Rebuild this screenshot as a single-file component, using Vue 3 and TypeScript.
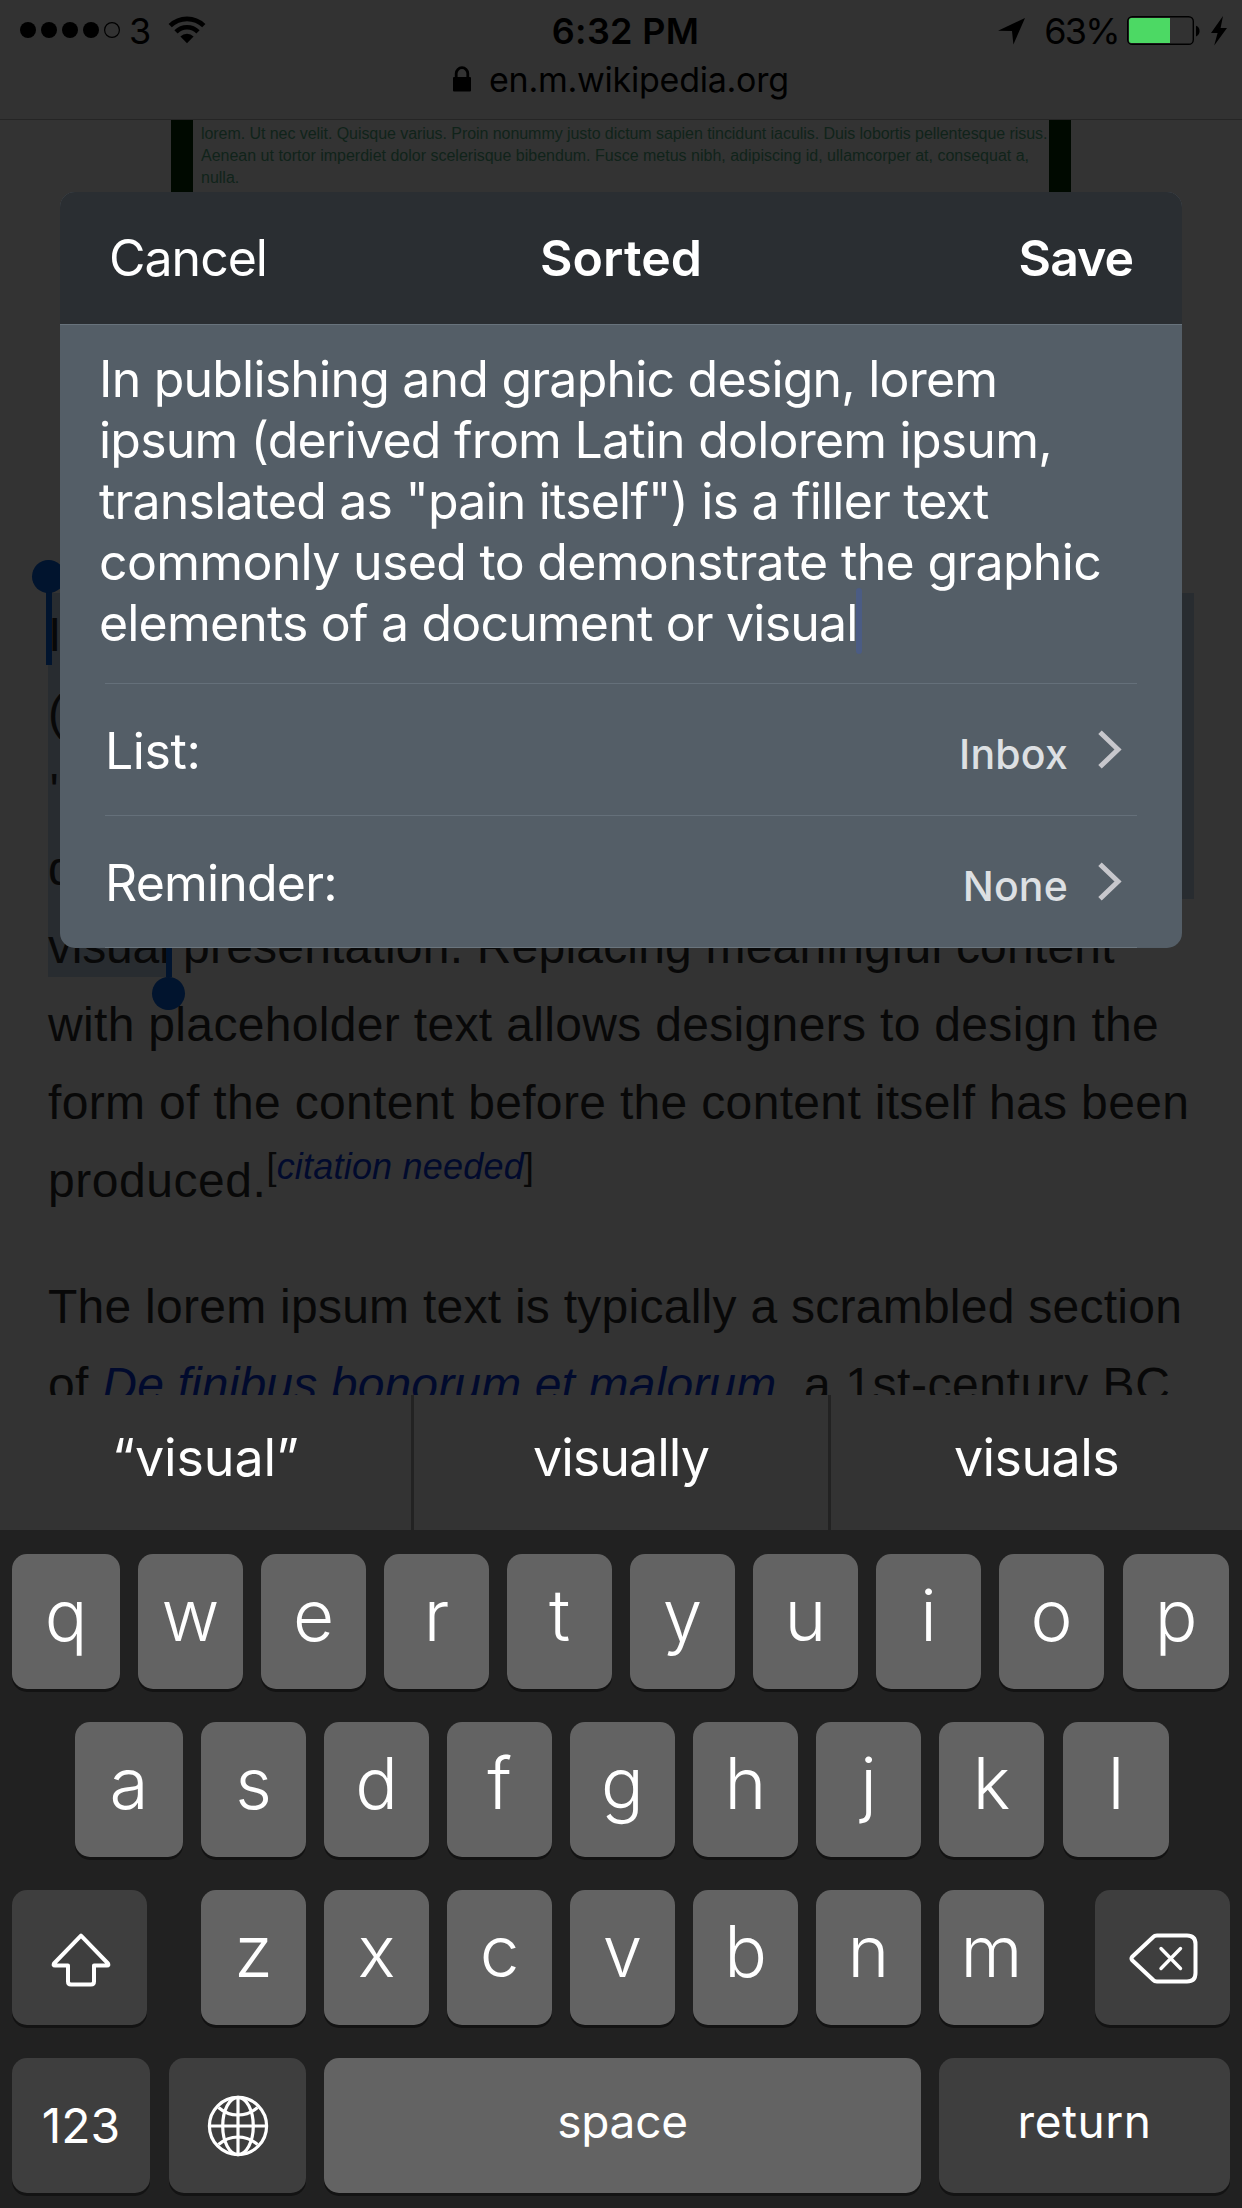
<script setup lang="ts">
interface Line { text: string; spacing: number }
interface Key { label?: string; icon?: 'shift' | 'delete' | 'globe'; width: number; gap?: number; dark?: boolean; small?: boolean; spacing?: number; raise?: number }

const noteLines: Line[] = [
  { text: 'In publishing and graphic design, lorem', spacing: -0.79 },
  { text: 'ipsum (derived from Latin dolorem ipsum,', spacing: -0.78 },
  { text: 'translated as "pain itself") is a filler text', spacing: -0.8 },
  { text: 'commonly used to demonstrate the graphic', spacing: -0.68 },
  { text: 'elements of a document or visual', spacing: -0.82 },
]

const rows = [
  { label: 'List:', value: 'Inbox', spacing: -0.4 },
  { label: 'Reminder:', value: 'None', spacing: -0.8 },
]

const suggestions = [
  { text: '“visual”', width: 411, spacing: -0.1 },
  { text: 'visually', width: 414, spacing: -1 },
  { text: 'visuals', width: 411, spacing: -0.6 },
]

const letters = (s: string): Key[] => s.split('').map((label) => ({ label, width: 105 }))

const topRow = letters('qwertyuiop')
topRow[0].width = 108
topRow[8].gap = 19
topRow[9].width = 106

const homeRow = letters('asdfghjkl')
homeRow[0].width = 108
homeRow[7].gap = 19
homeRow[8].width = 106

const lowerRow: Key[] = [
  { icon: 'shift', width: 135, gap: 54, dark: true },
  ...letters('zxcvbnm'),
  { icon: 'delete', width: 135, dark: true },
]
lowerRow[7].gap = 51

const bottomRow: Key[] = [
  { label: '123', width: 138, gap: 19, dark: true, small: true },
  { icon: 'globe', width: 137, dark: true },
  { label: 'space', width: 597, small: true, spacing: -0.3, raise: 10 },
  { label: 'return', width: 291, dark: true, small: true, spacing: 0.5, raise: 10 },
]

const keyboard = [
  { keys: topRow, inset: 12 },
  { keys: homeRow, inset: 75 },
  { keys: lowerRow, inset: 12 },
  { keys: bottomRow, inset: 12 },
]
</script>

<template>
  <div class="screen">
    <header class="browser-bar">
      <div class="status">
        <div class="status-left">
          <svg class="signal" width="100" height="16" viewBox="0 0 100 16">
            <circle cx="8" cy="8" r="8" /><circle cx="29" cy="8" r="8" /><circle cx="50" cy="8" r="8" /><circle cx="71" cy="8" r="8" />
            <circle cx="92" cy="8" r="7.4" fill="none" stroke="#000" stroke-width="1.2" />
          </svg>
          <span class="carrier">3</span>
          <svg class="wifi" width="38" height="28" viewBox="0 0 38 28">
            <path d="M2.2 9.7a24 24 0 0 1 33.6 0" fill="none" stroke="#000" stroke-width="4.6" />
            <path d="M8 15.8a15.6 15.6 0 0 1 22 0" fill="none" stroke="#000" stroke-width="4.6" />
            <path d="M19 27.2l-6.6-6.8a9.4 9.4 0 0 1 13.2 0z" />
          </svg>
        </div>
        <span class="time">6:32 PM</span>
        <div class="status-right">
          <svg class="location" width="27" height="27" viewBox="0 0 27 27"><path d="M27 0L15.4 26.5 14 13 0 12.8z" /></svg>
          <span class="percent">63%</span>
          <svg class="battery" width="74" height="30" viewBox="0 0 74 30">
            <rect x="0.7" y="0.7" width="65.6" height="27.6" rx="4.6" fill="none" stroke="#000" stroke-width="1.4" />
            <path d="M4.5 2H43V27H4.5A2.5 2.5 0 0 1 2 24.5V4.5A2.5 2.5 0 0 1 4.5 2z" fill="#4cd964" />
            <path d="M69 9.8c4.8 1.2 4.8 9.4 0 10.6z" />
          </svg>
          <svg class="bolt" width="16" height="30" viewBox="0 0 16 30"><path d="M12 0L0 17H6.6L3.2 29.5 16 12H9.6z" /></svg>
        </div>
      </div>
      <div class="address">
        <svg width="18" height="26" viewBox="0 0 18 26">
          <path d="M3.2 13V7.5a5.8 5.8 0 0 1 11.6 0V13" fill="none" stroke="#000" stroke-width="2.8" />
          <rect y="11" width="18" height="14.5" rx="1" />
        </svg>
        <span>en.m.wikipedia.org</span>
      </div>
    </header>

    <main class="page">
      <div class="sample">
        <span>purus, eget</span>
        <span class="tight">lorem. Ut nec velit. Quisque varius. Proin nonummy justo dictum sapien tincidunt iaculis. Duis lobortis pellentesque risus.</span>
        <span>Aenean ut tortor imperdiet dolor scelerisque bibendum. Fusce metus nibh, adipiscing id, ullamcorper at, consequat a,</span>
        <span>nulla.</span>
      </div>

      <article class="article">
        <div class="selection"></div>
        <div class="selection last"></div>
        <p>
          In publishing and graphic design, <b>lorem ipsum</b><br />
          (derived from Latin dolorem ipsum, translated as<br />
          <span class="l-quote">"pain itself") is a filler text commonly used to</span><br />
          demonstrate the graphic elements of a document or<br />
          <span class="l-visual"><span class="l-first">visual</span> presentation. Replacing meaningful content</span><br />
          with placeholder text allows designers to design the<br />
          form of the content before the content itself has been<br />
          <span class="l-produced">produced.</span><sup>[<a>citation needed</a>]</sup>
        </p>
        <p>
          <span class="l-the">The lorem ipsum text is typically a scrambled section</span><br />
          of <a class="book">De finibus bonorum et malorum</a><span class="l-century">, a 1st-century BC</span>
        </p>
        <i class="handle start"></i>
        <i class="handle end"></i>
      </article>
    </main>

    <section class="dialog">
      <div class="dialog-head">
        <span class="cancel">Cancel</span>
        <span class="title">Sorted</span>
        <span class="save">Save</span>
      </div>
      <div class="note">
        <span v-for="(line, i) in noteLines" :key="i" class="note-line" :style="{ letterSpacing: line.spacing + 'px' }">{{ line.text }}<i v-if="i === noteLines.length - 1" class="caret"></i></span>
      </div>
      <div v-for="row in rows" :key="row.label" class="option">
        <span class="option-label" :style="{ letterSpacing: row.spacing + 'px' }">{{ row.label }}</span>
        <span class="option-value">{{ row.value }}</span>
        <svg width="24" height="40" viewBox="0 0 24 40"><path d="M2 2.2L20 19.5 2 36.8" fill="none" stroke="#c7c7cc" stroke-width="5" /></svg>
      </div>
      <div class="dialog-end"></div>
    </section>

    <section class="keyboard">
      <div class="suggestions">
        <span v-for="s in suggestions" :key="s.text" class="suggestion" :style="{ width: s.width + 'px', letterSpacing: s.spacing + 'px' }">{{ s.text }}</span>
      </div>
      <div class="keys">
        <div v-for="(row, r) in keyboard" :key="r" class="key-row" :style="{ paddingLeft: row.inset + 'px' }">
          <div
            v-for="(key, k) in row.keys"
            :key="k"
            class="key"
            :class="{ dark: key.dark, small: key.small }"
            :style="{ width: key.width + 'px', marginRight: (key.gap ?? 18) + 'px' }"
          >
            <span v-if="key.label" :style="{ letterSpacing: (key.spacing ?? 0) + 'px', paddingBottom: (key.small ? (key.raise ?? 0) : 12) + 'px', fontSize: key.raise ? '46px' : undefined }">{{ key.label }}</span>
            <svg v-else-if="key.icon === 'shift'" class="i-shift" width="60" height="54" viewBox="0 0 60 54" fill="none" stroke="#fff" stroke-width="4" stroke-linejoin="round">
              <path d="M30 2.6L57 30.5Q58 32.6 56 32.6H43V48.5Q43 51.5 40 51.5H20Q17 51.5 17 48.5V32.6H4Q2 32.6 3 30.5Z" />
            </svg>
            <svg v-else-if="key.icon === 'delete'" class="i-delete" width="70" height="52" viewBox="0 0 70 52" fill="none" stroke="#fff" stroke-width="4" stroke-linecap="round" stroke-linejoin="round">
              <path d="M28 2.5H58Q66.500 2.5 66.5 11V40Q66.5 48.5 58 48.5H28Q25.6 48.5 24 46.8L3.2 27.3Q1.8 25.5 3.2 23.7L24 4.2Q25.6 2.5 28 2.5Z" />
              <path d="M32 15.5L51.5 35.500M51.5 15.5L32 35.5" stroke-width="3.4" />
            </svg>
            <svg v-else class="i-globe" width="62" height="62" viewBox="0 0 62 62" fill="none" stroke="#fff" stroke-width="3.2">
              <circle cx="31" cy="31" r="28.6" />
              <ellipse cx="31" cy="31" rx="15.3" ry="28.6" />
              <path d="M31 2V60M2 31H60" />
              <path d="M11.5 12.5Q20 20 31 20T50.5 12.5M11.5 49.5Q20 42 31 42T50.5 49.5" />
            </svg>
          </div>
        </div>
      </div>
    </section>
  </div>
</template>

<style>
body { margin: 0; background: #333; }
</style>

<style scoped>
.screen { position: relative; display: flex; flex-direction: column; width: 1242px; height: 2208px; overflow: hidden; background: #333; font-family: Inter, "Liberation Sans", sans-serif; }
svg { display: block; flex: none; }

.browser-bar { flex: none; box-sizing: border-box; height: 120px; border-bottom: 1px solid #252525; background: #323232; color: #000; }
.status { display: grid; grid-template-columns: 1fr auto 1fr; align-items: center; height: 62px; padding: 0 15px 0 20px; font-size: 36px; line-height: 62px; }
.status-left, .status-right { display: flex; align-items: center; }
.status-right { justify-content: flex-end; }
.signal { margin-top: -2px; }
.carrier { width: 27px; margin: 0 10px 0 9px; }
.wifi { margin: -3px 0 0 2px; }
.time { position: relative; left: 2px; font-weight: 600; letter-spacing: 0.3px; }
.location { margin-right: 19px; }
.percent { margin-right: 8px; letter-spacing: -1.7px; }
.battery { margin-right: 10px; }
.address { display: flex; align-items: center; height: 34px; padding-left: 453px; font-size: 34px; letter-spacing: -0.25px; line-height: 34px; }
.address svg { margin-right: 18px; }
.address span { padding-top: 2px; }

.page { flex: 1; min-height: 0; overflow: hidden; font-family: "Liberation Sans", Arial, sans-serif; color: #080808; }
.sample { display: flex; flex-direction: column; box-sizing: border-box; width: 900px; height: 235px; margin: -19px 0 0 171px; padding-left: 8px; border: solid #000900; border-width: 0 22px; font-size: 16px; line-height: 22px; white-space: nowrap; color: #10231a; }
.tight { letter-spacing: -0.06px; }
.article { position: relative; margin: 260px 0 0; padding-left: 48px; font-size: 48px; line-height: 78px; letter-spacing: 0.33px; white-space: nowrap; }
.article p { position: relative; margin: 0 0 48px; }
.article a { font-style: italic; color: #010a2d; }
.article sup { font-size: 36px; line-height: 0; letter-spacing: 0.2px; vertical-align: 18px; }
.l-quote { padding-left: 2px; }
.l-visual { letter-spacing: 0.2px; }
.l-first { letter-spacing: -0.2px; }
.l-the { letter-spacing: 0.26px; }
.l-produced { letter-spacing: 0.55px; }
.article .book { letter-spacing: 0.15px; }
.l-century { letter-spacing: 0.55px; }
.selection { position: absolute; left: 48px; top: -3px; width: 1146px; height: 306px; background: #282c30; }
.selection.last { top: 303px; width: 120px; height: 78px; }
.handle { position: absolute; width: 6px; height: 75px; background: #01142e; }
.handle::before { content: ""; position: absolute; left: -14px; width: 33px; height: 33px; border-radius: 50%; background: #01142e; }
.handle.start { left: 46px; top: -6px; }
.handle.start::before { top: -30px; }
.handle.end { left: 166px; top: 306px; }
.handle.end::before { bottom: -33px; }

.dialog { position: absolute; left: 60px; top: 192px; width: 1122px; height: 756px; overflow: hidden; border-radius: 15px; background: #545e67; color: #fff; font-size: 50px; }
.dialog-head { display: grid; grid-template-columns: 1fr auto 1fr; align-items: center; height: 132px; padding: 0 49px; border-bottom: 1px solid #68737c; background: #2a2e32; }
.cancel { letter-spacing: -1px; }
.title { font-weight: 600; letter-spacing: 0.1px; }
.save { font-weight: 600; letter-spacing: -1px; text-align: right; }
.note { display: flex; flex-direction: column; align-items: flex-start; height: 304px; padding: 24px 0 30px 39px; line-height: 61px; white-space: pre; }
.note-line { position: relative; }
.caret { position: absolute; right: -4px; top: -5px; width: 6px; height: 66px; border-radius: 3px; background: #4b5c84; }
.option { display: flex; align-items: center; height: 131px; margin: 0 45px; padding-right: 15px; border-top: 1px solid #65707a; }
.option-label { flex: 1; padding-top: 3px; }
.option-value { padding-top: 9px; margin-right: 30px; font-size: 41px; font-weight: 500; letter-spacing: 0.2px; color: #dde0e3; }
.dialog-end { height: 1px; margin: 0 45px; background: #6a757e; }

.keyboard { flex: none; height: 813px; color: #fff; background: #212121; }
.suggestions { display: flex; justify-content: space-between; height: 135px; background: #222; }
.suggestion { box-sizing: border-box; height: 135px; padding-bottom: 10px; background: #333; font-size: 52px; line-height: 125px; text-align: center; }
.keys { display: flex; flex-direction: column; gap: 33px; padding-top: 24px; }
.key-row { display: flex; height: 135px; }
.key { display: flex; flex: none; align-items: center; justify-content: center; height: 135px; border-radius: 15px; background: #636363; box-shadow: 0 3px 0 #131313; font-size: 71px; font-weight: 350; line-height: 1; }
.key.dark { background: #3e3e3e; }
.key.small { font-size: 48px; font-weight: 400; }
.i-shift { margin: 4px 0 0 3px; }
.i-delete { margin: 3px 0 0 2px; }
</style>
